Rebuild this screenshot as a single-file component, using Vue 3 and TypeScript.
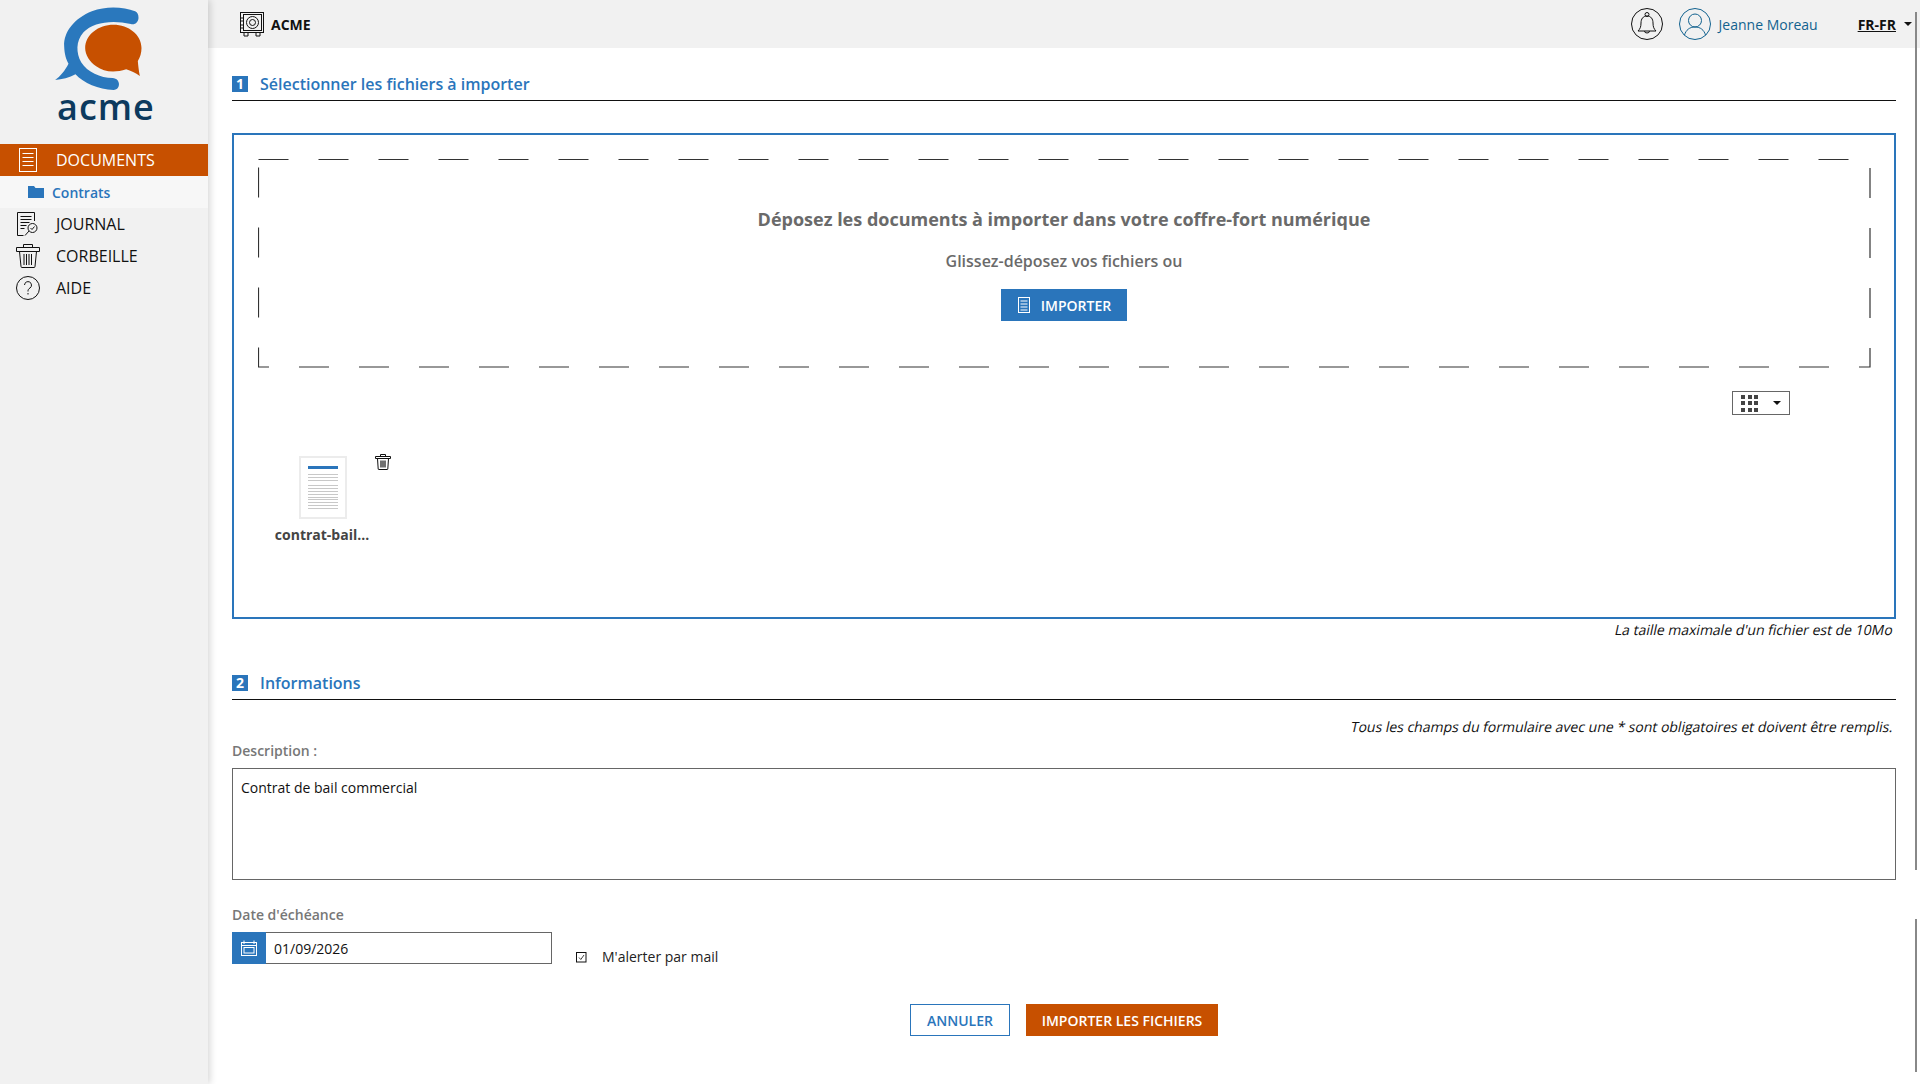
<script setup lang="ts">
import { ref } from 'vue'

interface NavItem {
  label: string
  icon: 'journal' | 'trash' | 'help'
}

const navItems: NavItem[] = [
  { label: 'JOURNAL', icon: 'journal' },
  { label: 'CORBEILLE', icon: 'trash' },
  { label: 'AIDE', icon: 'help' }
]

const description = ref('Contrat de bail commercial')
const dueDate = ref('01/09/2026')

// y positions of the fake text lines in the file thumbnail
const thumbLines = [18, 21, 24, 29, 32, 35, 38, 41, 43, 46, 49, 52]
</script>

<template>
  <div class="app">
    <aside class="sidebar">
      <div class="logo">
        <svg class="logo-mark" width="97" height="90" viewBox="150 10 290 270">
          <path
            fill="#2a78bd"
            d="M405 35 C370 22 320 18 275 35 C225 55 190 95 192 140 C193 165 198 180 205 192 C195 212 180 230 165 241 C185 240 208 234 226 224 C250 250 295 270 340 271 C352 271 358 260 356 250 C354 240 346 236 338 235 C300 235 262 218 243 188 C228 160 226 125 250 98 C278 68 335 60 392 73 C406 76 415 66 415 54 C415 45 412 38 405 35 Z"
          />
          <path
            fill="#c75000"
            d="M340 75 C385 75 424 105 424 145 C424 160 420 172 413 184 C414 198 416 214 419 229 C406 220 392 213 378 209 C345 220 312 218 288 200 C268 186 255 165 255 145 C255 105 295 75 340 75 Z"
          />
        </svg>
        <div class="logo-text">acme</div>
      </div>

      <nav class="nav">
        <a class="nav-row nav-active">
          <span class="nav-ico">
            <svg width="20" height="26" viewBox="0 0 20 26" fill="none" stroke="#fff">
              <rect x="1.500" y="1.500" width="17" height="23" />
              <path d="M4.500 6.500h11M4.500 10.500h11M4.500 14.500h11M4.500 18.500h11" />
            </svg>
          </span>
          <span>DOCUMENTS</span>
        </a>
        <a class="nav-sub">
          <svg width="16" height="12" viewBox="0 0 16 12" fill="#2a75bb">
            <path d="M0 0h6l1.500 2H16v10H0z" />
          </svg>
          <span>Contrats</span>
        </a>
        <a v-for="item in navItems" :key="item.label" class="nav-row">
          <span class="nav-ico">
            <svg
              v-if="item.icon === 'journal'"
              width="22"
              height="24"
              viewBox="0 0 22 24"
              fill="none"
              stroke="#111"
            >
              <path d="M17.500 9V.5H.5v23h6" />
              <path d="M3.500 4.500h11M3.500 7.500h11M3.500 10.500h9M3.500 13.500h6M3.500 16.500h4" />
              <circle cx="15.500" cy="16" r="4.500" />
              <path d="M12 19l-4 4.500M13.500 16l1.500 1.500 2.500-3" />
            </svg>
            <svg
              v-else-if="item.icon === 'trash'"
              width="24"
              height="24"
              viewBox="0 0 24 24"
              fill="none"
              stroke="#111"
            >
              <path d="M.5 3.500h23v4H.5zM7.500 3.500v-3h9v3" />
              <path d="M3.500 7.500l1.500 15a1 1 0 0 0 1 1h12a1 1 0 0 0 1-1l1.500-15" />
              <path d="M8 10v11M10.500 10v11M13 10v11M15.500 10v11" />
            </svg>
            <svg
              v-else
              width="24"
              height="24"
              viewBox="0 0 24 24"
              fill="none"
              stroke="#111"
            >
              <circle cx="12" cy="12" r="11.500" />
              <path d="M8.500 9a3.500 3.500 0 1 1 5.500 3c-1.500 1-2 1.600-2 3.500" />
              <path d="M12 17v1.500" />
            </svg>
          </span>
          <span>{{ item.label }}</span>
        </a>
      </nav>
    </aside>

    <div class="content">
      <header class="topbar">
        <div class="brand">
          <svg width="26" height="26" viewBox="0 0 26 26" fill="none" stroke="#111">
            <rect x="1.500" y="1.500" width="23" height="20" />
            <rect x="4.500" y="3.500" width="18" height="16" />
            <circle cx="13.500" cy="11.500" r="6" />
            <circle cx="13.500" cy="11.500" r="3" />
            <path d="M1.500 7h3v3h-3zM1.500 14h3v3h-3zM5 21.500h4v3.500H5zM17 21.500h4v3.500h-4z" />
          </svg>
          <span>ACME</span>
        </div>
        <div class="top-actions">
          <svg class="top-icon" width="32" height="32" viewBox="0 0 32 32" fill="none" stroke="#111">
            <circle cx="16" cy="16" r="15.500" />
            <path d="M16 8c-4 0-6 3-6 7 0 4-1 6-3 8h18c-2-2-3-4-3-8 0-4-2-7-6-7z" />
            <circle cx="16" cy="6.500" r="2" />
            <path d="M13.500 23a2.500 2 0 0 0 5 0" />
          </svg>
          <svg class="top-icon user-icon" width="32" height="32" viewBox="0 0 32 32" fill="none" stroke="#12628f">
            <circle cx="16" cy="16" r="15.500" />
            <circle cx="16" cy="12.500" r="6.500" />
            <path d="M5.500 27c1.500-5 5-8 10.500-8s9 3 10.500 8" />
          </svg>
          <span class="user-name">Jeanne Moreau</span>
          <a class="lang">FR-FR</a>
          <span class="caret lang-caret"></span>
        </div>
      </header>

      <main class="main">
        <h2 class="section-title"><span class="num">1</span>Sélectionner les fichiers à importer</h2>

        <section class="upload-box">
          <div class="dropzone">
            <svg class="dash" width="1613" height="209" fill="none">
              <rect x="0.500" y="0.500" width="1611.500" height="207.500" stroke="#333" stroke-width="1.200" stroke-dasharray="30 30" />
            </svg>
            <p class="drop-title">Déposez les documents à importer dans votre coffre-fort numérique</p>
            <p class="drop-sub">Glissez-déposez vos fichiers ou</p>
            <button class="btn btn-blue btn-import" type="button">
              <svg width="14" height="18" viewBox="0 0 14 18" fill="none" stroke="#fff">
                <rect x="1.500" y="1.500" width="11" height="15" />
                <path d="M3.500 5h7M3.500 8h7M3.500 11h7M3.500 14h7" />
              </svg>
              IMPORTER
            </button>
          </div>

          <div class="view-row">
            <button class="view-toggle" type="button">
              <span class="grid-icon">
                <i v-for="n in 9" :key="n"></i>
              </span>
              <span class="caret"></span>
            </button>
          </div>

          <div class="file">
            <div class="thumb-col">
              <svg class="thumb" width="48" height="63" viewBox="0 0 48 63">
                <rect x="1" y="1" width="46" height="61" fill="#fff" stroke="#ececec" stroke-width="2" />
                <rect x="9" y="10" width="30" height="3" fill="#2a75bb" />
                <rect v-for="y in thumbLines" :key="y" x="9" :y="y" width="30" height="1" fill="#c8c8c8" />
              </svg>
              <div class="file-name">contrat-bail...</div>
            </div>
            <svg class="file-del" width="16" height="16" viewBox="0 0 16 16" fill="none" stroke="#111">
              <path d="M.5 2.500h15v2H.5zM5.500 2.500V.5h5v2" />
              <path d="M2.500 4.500l.7 10.500a.5.5 0 0 0 .5.5h8.600a.5.5 0 0 0 .5-.5l.7-10.500" />
              <path d="M6 6.500v7M8 6.500v7M10 6.500v7" stroke-width="1.200" />
            </svg>
          </div>
        </section>
        <p class="hint hint-size"><span class="slant">La taille maximale d'un fichier est de 10Mo</span></p>

        <h2 class="section-title section-two"><span class="num">2</span>Informations</h2>
        <p class="hint hint-required">
          <span class="slant">Tous les champs du formulaire avec une * sont obligatoires et doivent être remplis.</span>
        </p>

        <label class="field-label">Description :</label>
        <textarea v-model="description" class="description"></textarea>

        <label class="field-label date-label">Date d'échéance</label>
        <div class="date-row">
          <div class="date-input">
            <span class="date-addon">
              <svg width="16" height="16" viewBox="0 0 16 16" fill="none" stroke="#fff">
                <rect x="0.500" y="2.500" width="15" height="13" />
                <path d="M.5 5.500h15M3 .5v3.500M13 .5v3.500" />
                <rect x="3" y="7.500" width="10" height="5.500" />
              </svg>
            </span>
            <input v-model="dueDate" type="text" />
          </div>
          <label class="alert-check">
            <svg width="11" height="11" viewBox="0 0 11 11" fill="none" stroke="#111">
              <rect x="0.500" y="0.500" width="9.500" height="9.500" />
              <path d="M3 5.500l1.800 2L8 3" stroke-width="0.800" />
            </svg>
            <span>M'alerter par mail</span>
          </label>
        </div>

        <div class="form-actions">
          <button class="btn btn-outline" type="button">ANNULER</button>
          <button class="btn btn-orange" type="button">IMPORTER LES FICHIERS</button>
        </div>
      </main>

      <!-- Scroll indicators over the right edge -->
      <div class="scroll-thumb scroll-a"></div>
      <div class="scroll-thumb scroll-b"></div>
    </div>
  </div>
</template>

<style>
html,
body {
  margin: 0;
  background: #fff;
  overflow: hidden;
}
</style>

<style scoped>
.app {
  display: flex;
  width: 1920px;
  height: 1084px;
  overflow: hidden;
  font-family: 'Open Sans', 'Liberation Sans', sans-serif;
  font-size: 14px;
  color: #111;
}

.sidebar {
  flex: 0 0 208px;
  background: #f1f1f1;
  box-shadow: 2px 0 7px rgba(0, 0, 0, 0.16);
  z-index: 2;
}

.logo {
  height: 144px;
  box-sizing: border-box;
  padding: 3px 0 0 50px;
}

.logo-mark {
  display: block;
}

.logo-text {
  margin: -4px 0 0 7px;
  font-size: 36px;
  line-height: 36px;
  font-weight: 600;
  letter-spacing: 1px;
  color: #0c3a5e;
}

.nav-row {
  display: flex;
  align-items: center;
  gap: 16px;
  height: 32px;
  padding-left: 16px;
  font-size: 16px;
  color: #111;
}

.nav-ico {
  display: flex;
  align-items: center;
  justify-content: center;
  width: 24px;
}

.nav-active {
  background: #c75000;
  color: #fff;
}

.nav-sub {
  display: flex;
  align-items: center;
  gap: 8px;
  height: 32px;
  padding-left: 28px;
  background: #f7f7f7;
  color: #2a75bb;
  font-weight: 600;
}

.content {
  position: relative;
  flex: 1;
  min-width: 0;
}

.topbar {
  display: flex;
  align-items: center;
  justify-content: space-between;
  height: 48px;
  padding: 0 8px 0 31px;
  background: #f1f1f1;
}

.brand {
  display: flex;
  align-items: center;
  gap: 6px;
  font-weight: 700;
}

.top-actions {
  display: flex;
  align-items: center;
}

.user-icon {
  margin-left: 16px;
}

.user-name {
  margin-left: 8px;
  color: #12628f;
}

.lang {
  margin-left: 40px;
  font-weight: 700;
  text-decoration: underline;
  color: #111;
}

.lang-caret {
  margin-left: 8px;
}

.caret {
  display: inline-block;
  width: 0;
  height: 0;
  border-left: 4px solid transparent;
  border-right: 4px solid transparent;
  border-top: 4px solid #111;
}

.main {
  padding: 28px 24px 0;
}

.section-title {
  display: flex;
  align-items: flex-start;
  gap: 12px;
  height: 24px;
  margin: 0;
  border-bottom: 1.500px solid #111;
  font-size: 16px;
  line-height: 16px;
  font-weight: 600;
  color: #2a75bb;
}

.num {
  display: block;
  width: 16px;
  height: 16px;
  background: #2a75bb;
  color: #fff;
  font-size: 14px;
  line-height: 16px;
  font-weight: 700;
  text-align: center;
}

.upload-box {
  box-sizing: border-box;
  height: 486px;
  margin-top: 32px;
  padding: 24px;
  border: 2px solid #2a75bb;
}

.dropzone {
  position: relative;
  box-sizing: border-box;
  width: 1612px;
  height: 209px;
  padding-top: 46px;
  text-align: center;
  color: #6a6a6a;
}

.dash {
  position: absolute;
  top: 0;
  left: 0;
}

.drop-title {
  margin: 0;
  font-size: 18px;
  line-height: 28px;
  font-weight: 700;
}

.drop-sub {
  margin: 14px 0 0;
  font-size: 16px;
  line-height: 28px;
  font-weight: 600;
}

.btn {
  display: inline-flex;
  align-items: center;
  justify-content: center;
  box-sizing: border-box;
  height: 32px;
  border: 0;
  font-family: inherit;
  font-size: 14px;
  font-weight: 600;
  color: #fff;
}

.btn-blue {
  background: #2a75bb;
}

.btn-import {
  gap: 10px;
  width: 126px;
  margin-top: 14px;
}

.view-row {
  display: flex;
  justify-content: flex-end;
  margin-top: 23px;
  padding-right: 80px;
}

.view-toggle {
  display: flex;
  align-items: center;
  justify-content: space-between;
  box-sizing: border-box;
  width: 58px;
  height: 24px;
  padding: 0 8px;
  border: 1px solid #666;
  background: #fff;
}

.grid-icon {
  display: grid;
  grid-template-columns: repeat(3, 4px);
  grid-auto-rows: 4px;
  gap: 2.500px;
}

.grid-icon i {
  background: #444;
}

.file {
  position: relative;
  width: 130px;
  margin: 41px 0 0 18px;
}

.thumb-col {
  display: flex;
  flex-direction: column;
  align-items: center;
  width: 94px;
}

.thumb {
  display: block;
}

.file-name {
  margin: 6px 2px 0 0;
  font-weight: 700;
  line-height: 19px;
  white-space: nowrap;
  color: #444;
}

.file-del {
  position: absolute;
  top: -2px;
  left: 99px;
}

.hint {
  margin: 0;
  text-align: right;
  line-height: 20px;
  padding-right: 3px;
}

/* upright face sheared: the reference uses a slanted regular, wider than the italic */
.slant {
  display: inline-block;
  transform: skewX(-12deg);
}

.hint-size {
  margin-top: 1px;
}

.section-two {
  margin-top: 35px;
}

.hint-required {
  margin-top: 17px;
}

.field-label {
  display: block;
  margin-top: 4px;
  line-height: 20px;
  font-weight: 600;
  color: #777;
}

.description {
  display: block;
  box-sizing: border-box;
  width: 100%;
  height: 112px;
  margin-top: 7px;
  padding: 9px 8px;
  border: 1px solid #666;
  border-radius: 0;
  outline: none;
  resize: none;
  font-family: inherit;
  font-size: 14px;
  line-height: 20px;
  color: #111;
}

.date-label {
  margin-top: 25px;
}

.date-row {
  display: flex;
  align-items: flex-start;
  margin-top: 7px;
}

.date-input {
  display: flex;
  box-sizing: border-box;
  width: 320px;
  height: 32px;
  border: 1px solid #666;
  border-left: 0;
}

.date-addon {
  display: flex;
  align-items: center;
  justify-content: center;
  width: 34px;
  margin-top: -1px;
  margin-bottom: -1px;
  background: #2a75bb;
}

.date-input input {
  flex: 1;
  min-width: 0;
  padding: 0 8px;
  border: 0;
  outline: none;
  font-family: inherit;
  font-size: 14px;
  color: #111;
}

.alert-check {
  display: flex;
  align-items: center;
  gap: 15px;
  margin: 15px 0 0 24px;
  line-height: 20px;
  color: #222;
}

.form-actions {
  display: flex;
  justify-content: center;
  gap: 16px;
  margin-top: 37px;
}

.btn-outline {
  width: 100px;
  border: 1px solid #2a75bb;
  background: #fff;
  color: #2a75bb;
}

.btn-orange {
  width: 192px;
  background: #c75000;
}

.scroll-thumb {
  position: absolute;
  right: 3px;
  width: 2px;
  background: #888;
}

.scroll-a {
  top: 12px;
  height: 858px;
}

.scroll-b {
  top: 919px;
  height: 153px;
}
</style>
